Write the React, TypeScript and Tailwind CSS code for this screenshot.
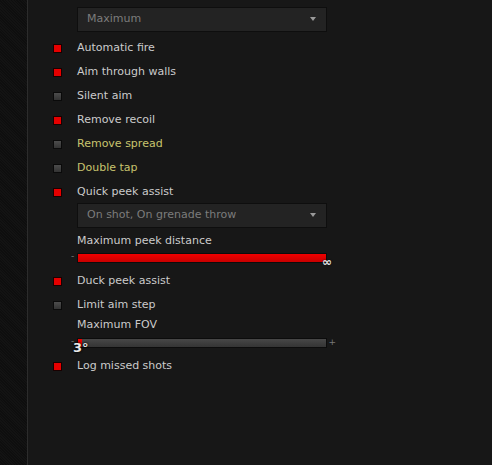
import React from "react";

type Row = { label: string; on: boolean; tone?: "warn" };

const Check = ({ on }: { on: boolean }) => (
  <div
    className={
      on
        ? "w-[9px] h-[9px] border border-[#1a0000] bg-[#e60000]"
        : "w-[9px] h-[9px] border border-[#0a0a0a] bg-[linear-gradient(#4c4c4c,#333)]"
    }
  />
);

const Toggle = ({ label, on, tone }: Row) => (
  <div className="flex items-center h-[24px]">
    <Check on={on} />
    <span
      className={
        tone === "warn"
          ? "ml-[15px] text-[#c8c46e]"
          : "ml-[15px] text-[#cbcbcb]"
      }
    >
      {label}
    </span>
  </div>
);

const Dropdown = ({ value }: { value: string }) => (
  <div className="ml-[24px] w-[250px] h-[25px] border border-[#0e0e0e] bg-[#232323] flex items-center justify-between px-[9px]">
    <span className="text-[#7c7c7c]">{value}</span>
    <div className="w-0 h-0 border-l-[3px] border-r-[3px] border-t-[4px] border-l-transparent border-r-transparent border-t-[#9a9a9a] mr-[1px] -mt-[2px]" />
  </div>
);

const Slider = ({
  pct,
  min,
  max,
  value,
}: {
  pct: number;
  min: string;
  max: string;
  value?: string;
}) => (
  <div className="relative ml-[24px] w-[250px] h-[10px]">
    <div className="w-full h-full border border-[#0c0c0c] bg-[linear-gradient(#474747,#343434)]">
      <div
        className="h-full bg-[linear-gradient(#f00000,#c80000)]"
        style={{ width: `${pct}%` }}
      />
    </div>
    <span className="absolute left-[-6px] top-[-1px] text-[9px] leading-none text-[#777]">
      {min}
    </span>
    {max === "∞" ? (
      <span className="absolute right-[-5px] top-[3px] text-[12px] font-bold leading-none text-[#e8e8e8] [text-shadow:0_0_2px_#000]">
        ∞
      </span>
    ) : (
      <span className="absolute right-[-9px] top-[0px] text-[9px] leading-none text-[#777]">
        {max}
      </span>
    )}
    {value && (
      <span className="absolute left-[-4px] top-[3px] text-[13px] font-bold leading-none text-[#e8e8e8] [text-shadow:0_0_2px_#000,0_0_2px_#000]">
        {value}
      </span>
    )}
  </div>
);

export default function App() {
  const top: Row[] = [
    { label: "Automatic fire", on: true },
    { label: "Aim through walls", on: true },
    { label: "Silent aim", on: false },
    { label: "Remove recoil", on: true },
    { label: "Remove spread", on: false, tone: "warn" },
    { label: "Double tap", on: false, tone: "warn" },
    { label: "Quick peek assist", on: true },
  ];

  return (
    <div
      className="flex w-[492px] h-[465px] bg-[#171717] text-[11px] overflow-hidden"
      style={{ fontFamily: '"DejaVu Sans", Verdana, sans-serif' }}
    >
      <div className="w-[28px] h-full border-r border-[#2c2c2c] bg-[#0f0f0f] bg-[repeating-linear-gradient(45deg,#0e0e0e_0px,#0e0e0e_1px,#131313_1px,#131313_2px)]" />
      <div className="flex flex-col pl-[25px] pt-[7px]">
        <Dropdown value="Maximum" />
        <div className="h-[4px]" />
        {top.map((r) => (
          <Toggle key={r.label} {...r} />
        ))}
        <div className="-mt-[1px]">
          <Dropdown value="On shot, On grenade throw" />
        </div>
        <div className="ml-[24px] h-[22px] flex items-center text-[#cbcbcb] mt-[2px]">
          Maximum peek distance
        </div>
        <div className="h-[1px]" />
        <Slider pct={100} min="-" max="∞" />
        <div className="h-[6px]" />
        <Toggle label="Duck peek assist" on={true} />
        <Toggle label="Limit aim step" on={false} />
        <div className="ml-[24px] h-[16px] flex items-center text-[#cbcbcb]">
          Maximum FOV
        </div>
        <div className="h-[5px]" />
        <Slider pct={1.5} min="-" max="+" value="3°" />
        <div className="h-[6px]" />
        <Toggle label="Log missed shots" on={true} />
      </div>
    </div>
  );
}
